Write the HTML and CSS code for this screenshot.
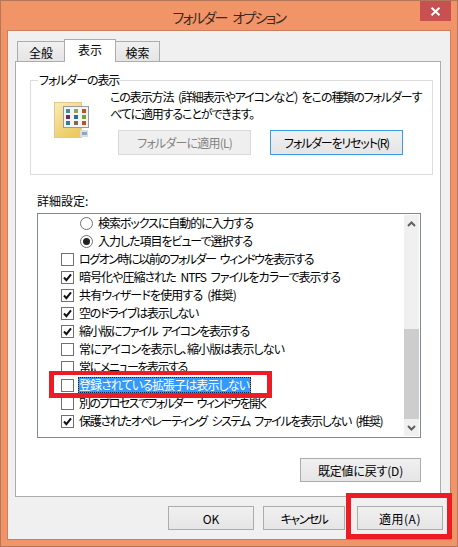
FILE: index.html
```html
<!DOCTYPE html>
<html lang="ja">
<head>
<meta charset="utf-8">
<title>フォルダー オプション</title>
<link rel="stylesheet" href="styles.css">
</head>
<body>
<div class="window">
  <header class="titlebar">
    <span></span>
    <h1 class="title">フォルダー オプション</h1>
    <button class="close" aria-label="閉じる">
      <svg width="11" height="9" viewBox="0 0 11 9"><path d="M1.5 0.8 L9.5 8.2 M9.5 0.8 L1.5 8.2" stroke="#fff" stroke-width="2" fill="none"/></svg>
    </button>
  </header>
  <div class="client">
    <div class="tabs">
      <div class="tab tab-first">全般</div>
      <div class="tab tab-active">表示</div>
      <div class="tab tab-last">検索</div>
    </div>
    <main class="panel">
      <fieldset class="group">
        <legend class="group-label">フォルダーの表示</legend>
        <div class="group-body">
          <svg class="folder-icon" width="42" height="38" viewBox="0 0 42 38">
            <defs>
              <linearGradient id="fg" x1="0" y1="0" x2="0.6" y2="1">
                <stop offset="0" stop-color="#f8edb8"/>
                <stop offset="1" stop-color="#ecc962"/>
              </linearGradient>
            </defs>
            <rect x="0.5" y="0.5" width="27" height="35" fill="url(#fg)" stroke="#e2c98a"/>
            <rect x="26" y="28" width="8" height="7" fill="#d9dde2"/>
            <rect x="28" y="30" width="5" height="3" fill="#8fa8c0"/>
            <rect x="9.5" y="4.5" width="25" height="21" fill="#f4f4f4" stroke="#9a9a9a"/>
            <g>
              <rect x="12" y="7" width="4" height="4" fill="#3f8f94"/><rect x="20" y="7" width="4" height="4" fill="#8ea35a"/><rect x="28" y="7" width="4" height="4" fill="#b9542a"/>
              <rect x="12" y="13" width="4" height="4" fill="#6c2b66"/><rect x="20" y="13" width="4" height="4" fill="#2c6f8a"/><rect x="28" y="13" width="4" height="4" fill="#6fa52c"/>
              <rect x="12" y="19" width="4" height="4" fill="#2f7f8f"/><rect x="20" y="19" width="4" height="4" fill="#7a6a50"/><rect x="28" y="19" width="4" height="4" fill="#b5562a"/>
            </g>
          </svg>
          <div class="group-main">
            <p class="group-text"><span class="line-one">この表示方法 (詳細表示やアイコンなど) をこの種類のフォルダーす</span><br><span class="line-two">べてに適用することができます。</span></p>
            <div class="group-buttons">
              <button class="btn btn-folder btn-disabled">フォルダーに適用(L)</button>
              <button class="btn btn-folder btn-focus">フォルダーをリセット(R)</button>
            </div>
          </div>
        </div>
      </fieldset>
      <div class="advanced">
        <div class="advanced-label">詳細設定:</div>
        <div class="listbox">
          <ul class="rows">
            <li class="row row-radio"><span class="radio"></span><span class="row-text">検索ボックスに自動的に入力する</span></li>
            <li class="row row-radio"><span class="radio radio-on"></span><span class="row-text">入力した項目をビューで選択する</span></li>
            <li class="row"><span class="check"></span><span class="row-text">ログオン時に以前のフォルダー ウィンドウを表示する</span></li>
            <li class="row"><span class="check"><svg viewBox="0 0 13 13"><path d="M3 6.5 L5.4 9.2 L10 3.4" class="tick"/></svg></span><span class="row-text">暗号化や圧縮された NTFS ファイルをカラーで表示する</span></li>
            <li class="row"><span class="check"><svg viewBox="0 0 13 13"><path d="M3 6.5 L5.4 9.2 L10 3.4" class="tick"/></svg></span><span class="row-text">共有ウィザードを使用する (推奨)</span></li>
            <li class="row"><span class="check"><svg viewBox="0 0 13 13"><path d="M3 6.5 L5.4 9.2 L10 3.4" class="tick"/></svg></span><span class="row-text">空のドライブは表示しない</span></li>
            <li class="row"><span class="check"><svg viewBox="0 0 13 13"><path d="M3 6.5 L5.4 9.2 L10 3.4" class="tick"/></svg></span><span class="row-text">縮小版にファイル アイコンを表示する</span></li>
            <li class="row"><span class="check"></span><span class="row-text">常にアイコンを表示し、縮小版は表示しない</span></li>
            <li class="row"><span class="check"></span><span class="row-text">常にメニューを表示する</span></li>
            <li class="row"><span class="check"></span><span class="row-text row-selected">登録されている拡張子は表示しない</span></li>
            <li class="row"><span class="check"></span><span class="row-text">別のプロセスでフォルダー ウィンドウを開く</span></li>
            <li class="row"><span class="check"><svg viewBox="0 0 13 13"><path d="M3 6.5 L5.4 9.2 L10 3.4" class="tick"/></svg></span><span class="row-text">保護されたオペレーティング システム ファイルを表示しない (推奨)</span></li>
          </ul>
          <div class="scrollbar">
            <div class="sb-arrow"><svg width="9" height="6" viewBox="0 0 9 6"><path d="M1 5 L4.5 1.5 L8 5" class="sb-chevron"/></svg></div>
            <div class="sb-track"><div class="sb-thumb"></div></div>
            <div class="sb-arrow"><svg width="9" height="6" viewBox="0 0 9 6"><path d="M1 1 L4.5 4.5 L8 1" class="sb-chevron"/></svg></div>
          </div>
        </div>
        <div class="restore-line"><button class="btn btn-restore">既定値に戻す(D)</button></div>
      </div>
    </main>
    <footer class="footer">
      <button class="btn btn-foot">OK</button>
      <button class="btn btn-foot btn-cancel">キャンセル</button>
      <button class="btn btn-foot btn-apply">適用(A)</button>
    </footer>
  </div>
  <div class="mark mark-row"></div>
  <div class="mark mark-apply"></div>
</div>
</body>
</html>
```
FILE: styles.css
```css
* { box-sizing: border-box; }
html, body { margin: 0; padding: 0; }
body {
  font-family: "Noto Sans CJK JP", "Noto Sans", sans-serif;
  font-size: 12px;
  font-feature-settings: "palt";
  color: #000;
  width: 458px;
  height: 547px;
  overflow: hidden;
}
.window {
  position: relative;
  width: 458px;
  height: 547px;
  background: #f19468;
  border: 1px solid #b5775a;
  padding: 0 6px 6px;
  display: flex;
  flex-direction: column;
}
.titlebar {
  height: 29px;
  flex: none;
  display: grid;
  grid-template-columns: 1fr auto 1fr;
  align-items: start;
}
.title {
  margin: 7px 0 0;
  font-size: 14px;
  font-weight: 400;
  line-height: 18px;
  letter-spacing: -1.65px;
  word-spacing: 4px;
  color: #3a2a22;
}
.close {
  justify-self: end;
  width: 31px;
  height: 20px;
  padding: 0;
  border: 0;
  background: #c75050;
  display: flex;
  align-items: center;
  justify-content: center;
}
.client {
  flex: 1;
  min-height: 0;
  background: #f0f0f0;
  border: 1px solid #c9805f;
  padding-top: 8px;
  display: flex;
  flex-direction: column;
}
.tabs {
  display: flex;
  align-items: flex-end;
  height: 22px;
  margin-left: 9px;
  position: relative;
  z-index: 1;
}
.tab {
  height: 20px;
  border: 1px solid #acacac;
  border-bottom: 0;
  background: linear-gradient(#f0f0f0, #e5e5e5);
  display: flex;
  align-items: center;
  justify-content: center;
  line-height: 16px;
  padding-top: 2px;
}
.tab-first { width: 47px; border-right: 0; }
.tab-last { width: 44px; border-left: 0; }
.tab-active {
  width: 52px;
  height: 23px;
  margin-bottom: -1px;
  background: #fff;
  padding-top: 0;
  padding-bottom: 3px;
}
.panel {
  width: 426px;
  height: 436px;
  margin-left: 7px;
  background: #fff;
  border: 1px solid #acacac;
  padding: 10px 7px 0 14px;
  flex: none;
}
.group {
  margin: 0;
  padding: 0 0 0 7px;
  height: 103px;
  border: 1px solid #dcdcdc;
  min-width: 0;
}
.group-label {
  padding: 0 0 0 1px;
  line-height: 16px;
  letter-spacing: -1.1px;
}
.group-body { display: flex; }
.folder-icon { margin: 14px 0 0 16px; flex: none; }
.group-main { margin-left: 14px; }
.group-text { margin: 0; line-height: 17px; white-space: nowrap; }
.line-one { letter-spacing: -1.1px; word-spacing: 3px; }
.line-two { letter-spacing: -1.13px; }
.group-buttons { display: flex; gap: 19px; margin: 8px 0 0 8px; }
.btn {
  font: inherit;
  font-feature-settings: inherit;
  height: 24px;
  padding: 0;
  color: #000;
  border: 1px solid #acacac;
  background: linear-gradient(#f0f0f0, #e5e5e5);
  display: flex;
  align-items: center;
  justify-content: center;
}
.btn-folder { width: 133px; height: 25px; }
.btn-disabled { background: #efefef; border-color: #d9d9d9; color: #838383; letter-spacing: -0.8px; }
.btn-focus { border-color: #3c9be8; letter-spacing: -1.17px; }
.advanced { margin: 18px 12px 0 7px; }
.advanced-label { line-height: 16px; margin-bottom: 4px; }
.listbox {
  height: 225px;
  border: 1px solid #828790;
  display: flex;
  overflow: hidden;
  background: #fff;
}
.rows { flex: 1; list-style: none; margin: 0; padding: 0; min-width: 0; }
.row {
  height: 18px;
  display: flex;
  align-items: center;
  padding-left: 23px;
  gap: 5px;
  white-space: nowrap;
  line-height: 16px;
  word-spacing: 3px;
}
.row:nth-child(1) { letter-spacing: -1.07px; }
.row:nth-child(2) { letter-spacing: -1.04px; }
.row:nth-child(3) { letter-spacing: -1.45px; }
.row:nth-child(4) { letter-spacing: -0.96px; }
.row:nth-child(5) { letter-spacing: -0.85px; }
.row:nth-child(6) { letter-spacing: -1.23px; }
.row:nth-child(7) { letter-spacing: -1.37px; }
.row:nth-child(8) { letter-spacing: -0.91px; }
.row:nth-child(9) { letter-spacing: -1.44px; }
.row:nth-child(10) { letter-spacing: -0.92px; }
.row:nth-child(11) { letter-spacing: -1.62px; }
.row:nth-child(12) { letter-spacing: -1.3px; }
.row-radio { padding-left: 42px; }
.check {
  width: 13px;
  height: 13px;
  border: 1px solid #707070;
  background: #fff;
  flex: none;
  display: block;
}
.check svg { display: block; width: 13px; height: 13px; margin: -1px; }
.tick { fill: none; stroke: #111; stroke-width: 2; }
.radio {
  width: 13px;
  height: 13px;
  border: 1px solid #707070;
  border-radius: 50%;
  flex: none;
  display: flex;
  align-items: center;
  justify-content: center;
}
.radio-on::after {
  content: "";
  width: 7px;
  height: 7px;
  border-radius: 50%;
  background: #222;
}
.row-selected {
  background: #3399ff;
  color: #fff;
  outline: 1px dotted #222;
  outline-offset: -1px;
  padding: 0 2px 0 1px;
  margin-left: -1px;
}
.scrollbar {
  width: 15px;
  flex: none;
  margin: 1px 1px 1px 0;
  background: #f0f0f0;
  display: flex;
  flex-direction: column;
}
.sb-arrow {
  height: 17px;
  flex: none;
  display: flex;
  align-items: center;
  justify-content: center;
}
.sb-chevron { fill: none; stroke: #606060; stroke-width: 2; }
.sb-track { flex: 1; display: flex; flex-direction: column; justify-content: flex-end; }
.sb-thumb { height: 90px; background: #cdcdcd; }
.restore-line { display: flex; justify-content: flex-end; margin-top: 20px; }
.btn-restore { width: 121px; letter-spacing: -0.2px; }
.footer {
  display: flex;
  gap: 9px;
  padding-top: 9px;
  margin-left: 160px;
}
.btn-foot { width: 86px; }
.btn-cancel { width: 82px; letter-spacing: -1.5px; }
.btn-apply { margin-left: 3px; letter-spacing: 0.5px; }
.mark { position: absolute; border: 5px solid #ed1c24; pointer-events: none; }
.mark-row { left: 48px; top: 370px; width: 223px; height: 27px; border-width: 4px 5px 5px; }
.mark-apply { left: 345px; top: 492px; width: 106px; height: 46px; }
```
